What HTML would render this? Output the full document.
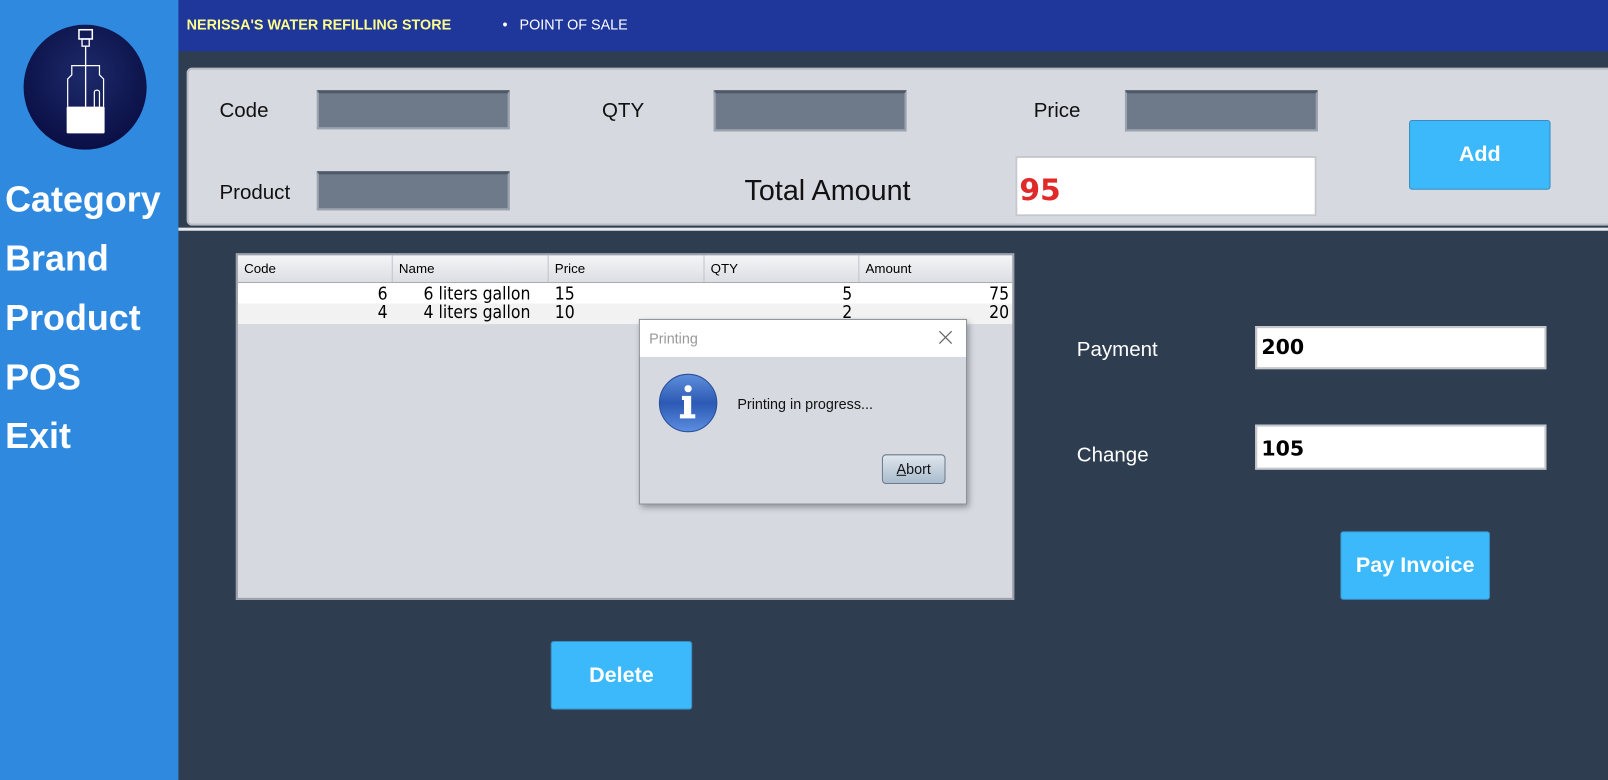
<!DOCTYPE html>
<html><head><meta charset="utf-8"><style>
html,body{margin:0;padding:0;width:1608px;height:780px;overflow:hidden;background:#2e3e50;font-family:"Liberation Sans",sans-serif}
#w{position:absolute;left:0;top:0;width:1568px;height:761px;transform:scale(1.0255);transform-origin:0 0;background:#2e3e50}
.a{position:absolute}
.side{left:0;top:0;width:174px;height:761px;background:#2f89df}
.menu{left:5px;color:#fff;font-weight:bold;font-size:35px;font-family:"Liberation Sans",sans-serif}
.lbl{font-size:20px;color:#111;font-family:"Liberation Sans",sans-serif}
.fld{background:#6e7a8a;border:2px solid #9aa3ae;border-top:3px solid #4f5966;box-sizing:border-box}
.btn{background:#3bb9fb;border:1px solid #3a8cc0;border-radius:3px;color:#fff;font-weight:bold;font-size:21px;display:flex;align-items:center;justify-content:center;font-family:"Liberation Sans",sans-serif;box-sizing:border-box}
.wf{background:#fff;border:2px solid #c4c7cc;box-sizing:border-box;font-weight:bold;font-size:20px;padding:6px 4px;font-family:"DejaVu Sans",sans-serif}
.th{top:0;height:26px;font-size:13px;line-height:26px;padding-left:6px;box-sizing:border-box;border-right:1px solid #c0c4cc}
.td{font-size:17px;line-height:19px;font-family:"DejaVu Sans Condensed","Liberation Sans Narrow",sans-serif;box-sizing:border-box}
</style></head><body><div id="w">
<div class="a side"></div>
<svg class="a" style="left:22px;top:24px" width="122" height="122" viewBox="0 0 122 122">
<defs><radialGradient id="g" cx="50%" cy="40%" r="60%"><stop offset="0" stop-color="#1d2a6a"/><stop offset="1" stop-color="#0a0f45"/></radialGradient></defs>
<ellipse cx="61" cy="61" rx="60" ry="61" fill="url(#g)"/>
<rect x="55" y="5" width="13" height="9" fill="none" stroke="#fff" stroke-width="1.5"/>
<rect x="58" y="14" width="7" height="7" fill="none" stroke="#fff" stroke-width="1.3"/>
<line x1="61.5" y1="21" x2="61.5" y2="80" stroke="#fff" stroke-width="1.3"/>
<path d="M44 80 V53 L48 49 V40 H75 V49 L79 53 V80" fill="none" stroke="#fff" stroke-width="1.2"/>
<rect x="70" y="64" width="5" height="24" rx="2" fill="none" stroke="#fff" stroke-width="1.2"/>
<rect x="43" y="80" width="37" height="26" rx="1" fill="#fff"/>
</svg>
<div class="a menu" style="top:175px">Category</div>
<div class="a menu" style="top:233px">Brand</div>
<div class="a menu" style="top:291px">Product</div>
<div class="a menu" style="top:349px">POS</div>
<div class="a menu" style="top:406px">Exit</div>
<div class="a" style="left:174px;top:0;width:1394px;height:50px;background:#1f379a"></div>
<div class="a" style="left:182px;top:16px;color:#ffff8c;font-weight:bold;font-size:14px;font-family:'Liberation Sans',sans-serif">NERISSA'S WATER REFILLING STORE</div>
<div class="a" style="left:490px;top:16px;color:#fff;font-size:14px">•&nbsp;&nbsp; POINT OF SALE</div>
<div class="a" style="left:182px;top:66px;width:1400px;height:154px;background:#d6d9e0;border:2px solid #b8bcc4;border-radius:5px;box-sizing:border-box"></div>
<div class="a" style="left:174px;top:222px;width:1394px;height:3px;background:#e6e8ec"></div>
<div class="a lbl" style="left:214px;top:97px">Code</div>
<div class="a fld" style="left:309px;top:88px;width:188px;height:38px"></div>
<div class="a lbl" style="left:587px;top:97px">QTY</div>
<div class="a fld" style="left:696px;top:88px;width:188px;height:40px"></div>
<div class="a lbl" style="left:1008px;top:97px">Price</div>
<div class="a fld" style="left:1097px;top:88px;width:188px;height:40px"></div>
<div class="a lbl" style="left:214px;top:177px">Product</div>
<div class="a fld" style="left:309px;top:167px;width:188px;height:38px"></div>
<div class="a lbl" style="left:726px;top:170px;font-size:28px">Total Amount</div>
<div class="a wf" style="left:990px;top:152px;width:294px;height:59px;color:#e02a2a;font-size:29px;padding:14px 2px">95</div>
<div class="a btn" style="left:1374px;top:117px;width:138px;height:68px">Add</div>
<div class="a" style="left:230px;top:247px;width:759px;height:338px;background:#d6d9e0;border:2px solid #9da2aa;box-sizing:border-box;overflow:hidden">
 <div class="a" style="left:0;top:0;width:759px;height:26px;background:linear-gradient(#f4f5f7,#dcdee3);border-bottom:1px solid #a8acb4"></div>
 <div class="a th" style="left:0;width:151px">Code</div>
 <div class="a th" style="left:151px;width:152px">Name</div>
 <div class="a th" style="left:303px;width:152px">Price</div>
 <div class="a th" style="left:455px;width:151px">QTY</div>
 <div class="a th" style="left:606px;width:153px;border:none">Amount</div>
 <div class="a" style="left:0;top:27px;width:759px;height:20px;background:#fff"></div>
 <div class="a" style="left:0;top:47px;width:759px;height:20px;background:#f2f2f2"></div>
 <div class="a td" style="left:0;top:29px;width:146px;text-align:right">6</div>
 <div class="a td" style="left:0;top:47px;width:146px;text-align:right">4</div>
 <div class="a td" style="left:181px;top:29px">6 liters gallon</div>
 <div class="a td" style="left:181px;top:47px">4 liters gallon</div>
 <div class="a td" style="left:309px;top:29px">15</div>
 <div class="a td" style="left:309px;top:47px">10</div>
 <div class="a td" style="left:455px;top:29px;width:144px;text-align:right">5</div>
 <div class="a td" style="left:455px;top:47px;width:144px;text-align:right">2</div>
 <div class="a td" style="left:606px;top:29px;width:146px;text-align:right">75</div>
 <div class="a td" style="left:606px;top:47px;width:146px;text-align:right">20</div>
</div>
<div class="a" style="left:623px;top:311px;width:320px;height:181px;background:#d6d9e0;border:1px solid #8a8e96;box-sizing:border-box;box-shadow:2px 3px 6px rgba(0,0,0,.35)">
 <div class="a" style="left:0;top:0;width:318px;height:36px;background:#fff"></div>
 <div class="a" style="left:9px;top:10px;font-size:14px;color:#999">Printing</div>
 <svg class="a" style="left:291px;top:10px" width="14" height="14"><path d="M1 1L13 13M13 1L1 13" stroke="#666" stroke-width="1.2"/></svg>
 <svg class="a" style="left:18px;top:52px" width="58" height="58" viewBox="0 0 58 58"><defs><linearGradient id="b" x1="0" y1="0" x2="0" y2="1"><stop offset="0" stop-color="#5e8fdc"/><stop offset=".5" stop-color="#2c59b3"/><stop offset="1" stop-color="#5c8ee0"/></linearGradient></defs><circle cx="29" cy="29" r="28" fill="url(#b)" stroke="#2a4e9a"/><circle cx="29" cy="15" r="3.5" fill="#fff"/><path d="M23 22H32V40H36V44H21V40H25V26H23Z" fill="#fff"/></svg>
 <div class="a" style="left:95px;top:74px;font-size:14px;color:#111">Printing in progress...</div>
 <div class="a" style="left:236px;top:131px;width:62px;height:29px;border:1px solid #6c7a8c;border-radius:4px;background:linear-gradient(#dfe6ee,#a9bccd);box-sizing:border-box;font-size:14px;text-align:center;line-height:27px;color:#111"><u>A</u>bort</div>
</div>
<div class="a" style="left:1050px;top:330px;color:#fff;font-size:20px;font-family:'Liberation Sans',sans-serif">Payment</div>
<div class="a wf" style="left:1224px;top:318px;width:284px;height:42px">200</div>
<div class="a" style="left:1050px;top:433px;color:#fff;font-size:20px;font-family:'Liberation Sans',sans-serif">Change</div>
<div class="a wf" style="left:1224px;top:414px;width:284px;height:44px;padding-top:9px">105</div>
<div class="a btn" style="left:1307px;top:518px;width:146px;height:67px">Pay Invoice</div>
<div class="a btn" style="left:537px;top:625px;width:138px;height:67px">Delete</div>
</div></body></html>
